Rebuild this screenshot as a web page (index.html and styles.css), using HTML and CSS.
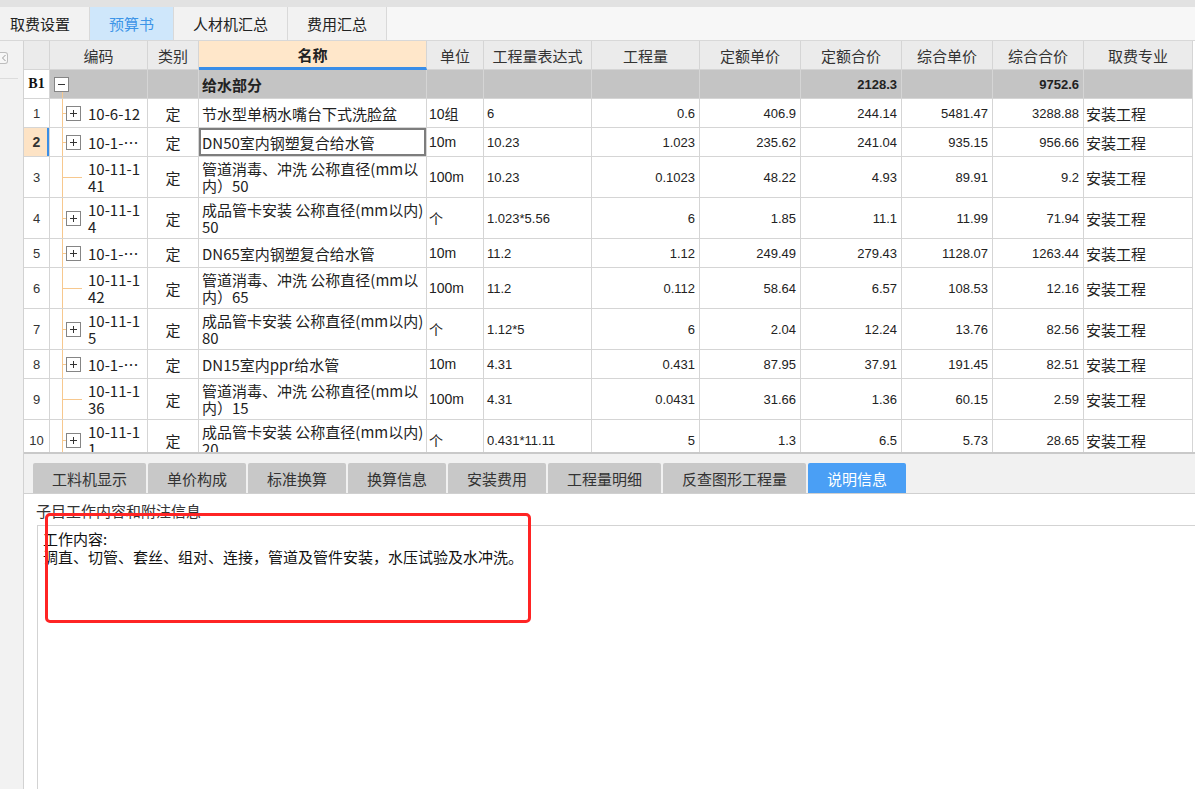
FILE: index.html
```html
<!DOCTYPE html>
<html lang="zh-CN">
<head>
<meta charset="utf-8">
<title>预算书</title>
<link rel="stylesheet" href="styles.css">
</head>
<body>
<div class="topbar"></div>
<nav class="tabbar">
  <div class="tab first">取费设置</div>
  <div class="tab active">预算书</div>
  <div class="tab">人材机汇总</div>
  <div class="tab">费用汇总</div>
</nav>
<div class="main">
  <aside class="side">
    <div class="side-btn"><svg width="6" height="8" viewBox="0 0 6 8"><path d="M4.5 1 1.5 4l3 3" fill="none" stroke="#9a9a9a" stroke-width="1"/></svg></div>
    <div class="side-line"></div>
  </aside>
  <section class="work">
    <div class="grid">
      <div class="row head">
        <div class="c"></div>
        <div class="c">编码</div>
        <div class="c">类别</div>
        <div class="c h-name">名称</div>
        <div class="c">单位</div>
        <div class="c">工程量表达式</div>
        <div class="c">工程量</div>
        <div class="c">定额单价</div>
        <div class="c">定额合价</div>
        <div class="c">综合单价</div>
        <div class="c">综合合价</div>
        <div class="c">取费专业</div>
      </div>
      <div class="row group">
        <div class="c no b1">B1</div>
        <div class="c code root"><span class="tog minus"></span></div>
        <div class="c type"></div>
        <div class="c name">给水部分</div>
        <div class="c unit"></div>
        <div class="c expr"></div>
        <div class="c num"></div>
        <div class="c num"></div>
        <div class="c num">2128.3</div>
        <div class="c num"></div>
        <div class="c num">9752.6</div>
        <div class="c fee"></div>
      </div>
      <div class="row">
        <div class="c no">1</div>
        <div class="c code"><span class="tog plus"></span><span>10-6-12</span></div>
        <div class="c type">定</div>
        <div class="c name">节水型单柄水嘴台下式洗脸盆</div>
        <div class="c unit">10组</div>
        <div class="c expr">6</div>
        <div class="c num">0.6</div>
        <div class="c num">406.9</div>
        <div class="c num">244.14</div>
        <div class="c num">5481.47</div>
        <div class="c num">3288.88</div>
        <div class="c fee">安装工程</div>
      </div>
      <div class="row">
        <div class="c no cur">2</div>
        <div class="c code"><span class="tog plus"></span><span>10-1-⋯</span></div>
        <div class="c type">定</div>
        <div class="c name sel">DN50室内钢塑复合给水管</div>
        <div class="c unit">10m</div>
        <div class="c expr">10.23</div>
        <div class="c num">1.023</div>
        <div class="c num">235.62</div>
        <div class="c num">241.04</div>
        <div class="c num">935.15</div>
        <div class="c num">956.66</div>
        <div class="c fee">安装工程</div>
      </div>
      <div class="row tall">
        <div class="c no">3</div>
        <div class="c code leaf"><span class="tog none"></span><span class="ml"><span class="ln">10-11-1</span><span class="ln">41</span></span></div>
        <div class="c type">定</div>
        <div class="c name"><span class="ml"><span class="ln">管道消毒、冲洗 公称直径(mm以</span><span class="ln">内）50</span></span></div>
        <div class="c unit">100m</div>
        <div class="c expr">10.23</div>
        <div class="c num">0.1023</div>
        <div class="c num">48.22</div>
        <div class="c num">4.93</div>
        <div class="c num">89.91</div>
        <div class="c num">9.2</div>
        <div class="c fee">安装工程</div>
      </div>
      <div class="row tall">
        <div class="c no">4</div>
        <div class="c code"><span class="tog plus"></span><span class="ml"><span class="ln">10-11-1</span><span class="ln">4</span></span></div>
        <div class="c type">定</div>
        <div class="c name"><span class="ml"><span class="ln">成品管卡安装 公称直径(mm以内)</span><span class="ln">50</span></span></div>
        <div class="c unit">个</div>
        <div class="c expr">1.023*5.56</div>
        <div class="c num">6</div>
        <div class="c num">1.85</div>
        <div class="c num">11.1</div>
        <div class="c num">11.99</div>
        <div class="c num">71.94</div>
        <div class="c fee">安装工程</div>
      </div>
      <div class="row">
        <div class="c no">5</div>
        <div class="c code"><span class="tog plus"></span><span>10-1-⋯</span></div>
        <div class="c type">定</div>
        <div class="c name">DN65室内钢塑复合给水管</div>
        <div class="c unit">10m</div>
        <div class="c expr">11.2</div>
        <div class="c num">1.12</div>
        <div class="c num">249.49</div>
        <div class="c num">279.43</div>
        <div class="c num">1128.07</div>
        <div class="c num">1263.44</div>
        <div class="c fee">安装工程</div>
      </div>
      <div class="row tall">
        <div class="c no">6</div>
        <div class="c code leaf"><span class="tog none"></span><span class="ml"><span class="ln">10-11-1</span><span class="ln">42</span></span></div>
        <div class="c type">定</div>
        <div class="c name"><span class="ml"><span class="ln">管道消毒、冲洗 公称直径(mm以</span><span class="ln">内）65</span></span></div>
        <div class="c unit">100m</div>
        <div class="c expr">11.2</div>
        <div class="c num">0.112</div>
        <div class="c num">58.64</div>
        <div class="c num">6.57</div>
        <div class="c num">108.53</div>
        <div class="c num">12.16</div>
        <div class="c fee">安装工程</div>
      </div>
      <div class="row tall">
        <div class="c no">7</div>
        <div class="c code"><span class="tog plus"></span><span class="ml"><span class="ln">10-11-1</span><span class="ln">5</span></span></div>
        <div class="c type">定</div>
        <div class="c name"><span class="ml"><span class="ln">成品管卡安装 公称直径(mm以内)</span><span class="ln">80</span></span></div>
        <div class="c unit">个</div>
        <div class="c expr">1.12*5</div>
        <div class="c num">6</div>
        <div class="c num">2.04</div>
        <div class="c num">12.24</div>
        <div class="c num">13.76</div>
        <div class="c num">82.56</div>
        <div class="c fee">安装工程</div>
      </div>
      <div class="row">
        <div class="c no">8</div>
        <div class="c code"><span class="tog plus"></span><span>10-1-⋯</span></div>
        <div class="c type">定</div>
        <div class="c name">DN15室内ppr给水管</div>
        <div class="c unit">10m</div>
        <div class="c expr">4.31</div>
        <div class="c num">0.431</div>
        <div class="c num">87.95</div>
        <div class="c num">37.91</div>
        <div class="c num">191.45</div>
        <div class="c num">82.51</div>
        <div class="c fee">安装工程</div>
      </div>
      <div class="row tall">
        <div class="c no">9</div>
        <div class="c code leaf"><span class="tog none"></span><span class="ml"><span class="ln">10-11-1</span><span class="ln">36</span></span></div>
        <div class="c type">定</div>
        <div class="c name"><span class="ml"><span class="ln">管道消毒、冲洗 公称直径(mm以</span><span class="ln">内）15</span></span></div>
        <div class="c unit">100m</div>
        <div class="c expr">4.31</div>
        <div class="c num">0.0431</div>
        <div class="c num">31.66</div>
        <div class="c num">1.36</div>
        <div class="c num">60.15</div>
        <div class="c num">2.59</div>
        <div class="c fee">安装工程</div>
      </div>
      <div class="row tall">
        <div class="c no">10</div>
        <div class="c code"><span class="tog plus"></span><span class="ml"><span class="ln">10-11-1</span><span class="ln">1</span></span></div>
        <div class="c type">定</div>
        <div class="c name"><span class="ml"><span class="ln">成品管卡安装 公称直径(mm以内)</span><span class="ln">20</span></span></div>
        <div class="c unit">个</div>
        <div class="c expr">0.431*11.11</div>
        <div class="c num">5</div>
        <div class="c num">1.3</div>
        <div class="c num">6.5</div>
        <div class="c num">5.73</div>
        <div class="c num">28.65</div>
        <div class="c fee">安装工程</div>
      </div>
    </div>
    <div class="lower">
      <div class="subtabs">
        <div class="stab">工料机显示</div>
        <div class="stab">单价构成</div>
        <div class="stab">标准换算</div>
        <div class="stab">换算信息</div>
        <div class="stab">安装费用</div>
        <div class="stab">工程量明细</div>
        <div class="stab">反查图形工程量</div>
        <div class="stab on">说明信息</div>
      </div>
      <div class="info">
        <div class="info-label">子目工作内容和附注信息</div>
        <div class="info-box">工作内容:<br>调直、切管、套丝、组对、连接，管道及管件安装，水压试验及水冲洗。</div>
        <div class="mark"></div>
      </div>
    </div>
  </section>
</div>
</body>
</html>
```
FILE: styles.css
```css
* { box-sizing: border-box; margin: 0; padding: 0; }
html, body { width: 1195px; height: 789px; overflow: hidden; }
body {
  font-family: "Noto Sans CJK SC", "Microsoft YaHei", sans-serif;
  font-size: 15px;
  color: #222;
  background: #f3f3f3;
  display: flex;
  flex-direction: column;
}
.topbar { height: 7px; background: #e2e2e2; flex: none; }
.tabbar {
  height: 34px;
  flex: none;
  display: flex;
  background: #f7f7f7;
  border-bottom: 1px solid #d8d8d8;
}
.tab {
  display: flex;
  align-items: center;
  padding: 0 19px;
  border-right: 1px solid #d9d9d9;
  background: #f2f2f2;
  color: #222;
  line-height: 1;
}
.tab.first { padding: 0 19px 0 10px; }
.tab.active { background: #cfe7fb; color: #3d95e8; }

.main { flex: 1; display: flex; min-height: 0; }
.side {
  width: 24px;
  flex: none;
  background: #f2f2f2;
  border-right: 1px solid #d2d2d2;
  padding-top: 11px;
}
.side-btn {
  width: 8px;
  height: 12px;
  border: 1px solid #bdbdbd;
  border-left: none;
  border-radius: 0 3px 3px 0;
  background: #f7f7f7;
  display: flex;
  align-items: center;
  justify-content: center;
}
.side-line { margin-top: 14px; width: 18px; height: 1px; background: #dcdcdc; }

.work { flex: 1; display: flex; flex-direction: column; min-width: 0; }
.grid { height: 411px; flex: none; overflow: hidden; background: #fff; }
.row {
  display: grid;
  grid-template-columns: 26px 98px 51px 228px 57px 108px 108px 101px 101px 91px 91px 109px;
  height: 29px;
}
.row.tall { height: 41px; }
.c {
  border-right: 1px solid #d5d5d5;
  border-bottom: 1px solid #d5d5d5;
  display: flex;
  align-items: center;
  overflow: hidden;
  white-space: nowrap;
  min-width: 0;
}
.ml { display: flex; flex-direction: column; }
.ln { display: block; height: 17px; line-height: 17px; }

.head .c { background: #ebebeb; justify-content: center; color: #333; }
.head .h-name { background: #ffe7ca; font-weight: bold; color: #222; border-bottom: 3px solid #3a8ee8; }

.no {
  justify-content: center;
  font-family: "Liberation Sans", sans-serif;
  font-size: 13px;
  color: #333;
}
.no.cur { background: #fde3c5; font-weight: bold; font-size: 14px; box-shadow: inset -2px 0 0 #3a8ee6; }
.no.b1 { font-family: "Liberation Serif", serif; font-weight: bold; font-size: 14px; color: #111; }

.group .c { background: #c4c4c4; font-weight: bold; }
.group .c.no { background: #fff; }

.code { position: relative; }
.code::before {
  content: "";
  position: absolute;
  left: 12px;
  top: 0;
  bottom: -1px;
  width: 1px;
  background: #f7c88e;
}
.code::after {
  content: "";
  position: absolute;
  left: 12px;
  top: 50%;
  width: 4px;
  height: 1px;
  background: #f7c88e;
}
.code.leaf::after { width: 20px; }
.code.root::before { top: 22px; }
.code.root::after { display: none; }

.tog {
  position: relative;
  flex: none;
  width: 15px;
  height: 15px;
  margin: 0 7px 0 16px;
  border: 1px solid #858585;
  background: #fff;
}
.tog.none { border: none; background: transparent; }
.code.root .tog { margin-left: 4px; }
.tog.plus::before, .tog.minus::before {
  content: "";
  position: absolute;
  left: 3px;
  right: 3px;
  top: 6px;
  height: 1px;
  background: #333;
}
.tog.plus::after {
  content: "";
  position: absolute;
  top: 3px;
  bottom: 3px;
  left: 6px;
  width: 1px;
  background: #333;
}

.type { justify-content: center; }
.name { padding-left: 3px; }
.name.sel { box-shadow: inset 0 0 0 2px #7d7d7d; }
.unit {
  padding-left: 2px;
  font-family: "Liberation Sans Narrow", "Liberation Sans", "Noto Sans CJK SC", sans-serif;
  font-size: 14px;
}
.expr {
  padding-left: 3px;
  font-family: "Liberation Sans Narrow", "Liberation Sans", sans-serif;
  font-size: 13px;
}
.num {
  justify-content: flex-end;
  padding-right: 4px;
  font-family: "Liberation Sans Narrow", "Liberation Sans", sans-serif;
  font-size: 13px;
}
.fee { padding-left: 2px; }

.lower {
  flex: 1;
  display: flex;
  flex-direction: column;
  min-height: 0;
  border-top: 2px solid #c9c9c9;
}
.subtabs {
  height: 40px;
  flex: none;
  display: flex;
  gap: 2px;
  padding: 9px 0 0 9px;
  background: #f1f1f1;
  border-bottom: 1px solid #d0d0d0;
}
.stab {
  display: flex;
  align-items: center;
  padding: 0 19px;
  background: #c8c8c8;
  color: #333;
  border-radius: 2px 2px 0 0;
  line-height: 1;
}
.stab.on { background: #4a9ff5; color: #fff; }

.info {
  flex: 1;
  position: relative;
  background: #fff;
  padding: 8px 0 0 12px;
  display: flex;
  flex-direction: column;
  min-height: 0;
}
.info-label { line-height: 18px; color: #333; }
.info-box {
  flex: 1;
  margin: 5px 0 0 1px;
  border-top: 1px solid #d3d3d3;
  border-left: 1px solid #d3d3d3;
  padding: 4px 5px;
  line-height: 18px;
  color: #111;
}
.mark {
  position: absolute;
  left: 21px;
  top: 19px;
  width: 486px;
  height: 110px;
  border: 3px solid #ff2424;
  border-radius: 5px;
}
```
